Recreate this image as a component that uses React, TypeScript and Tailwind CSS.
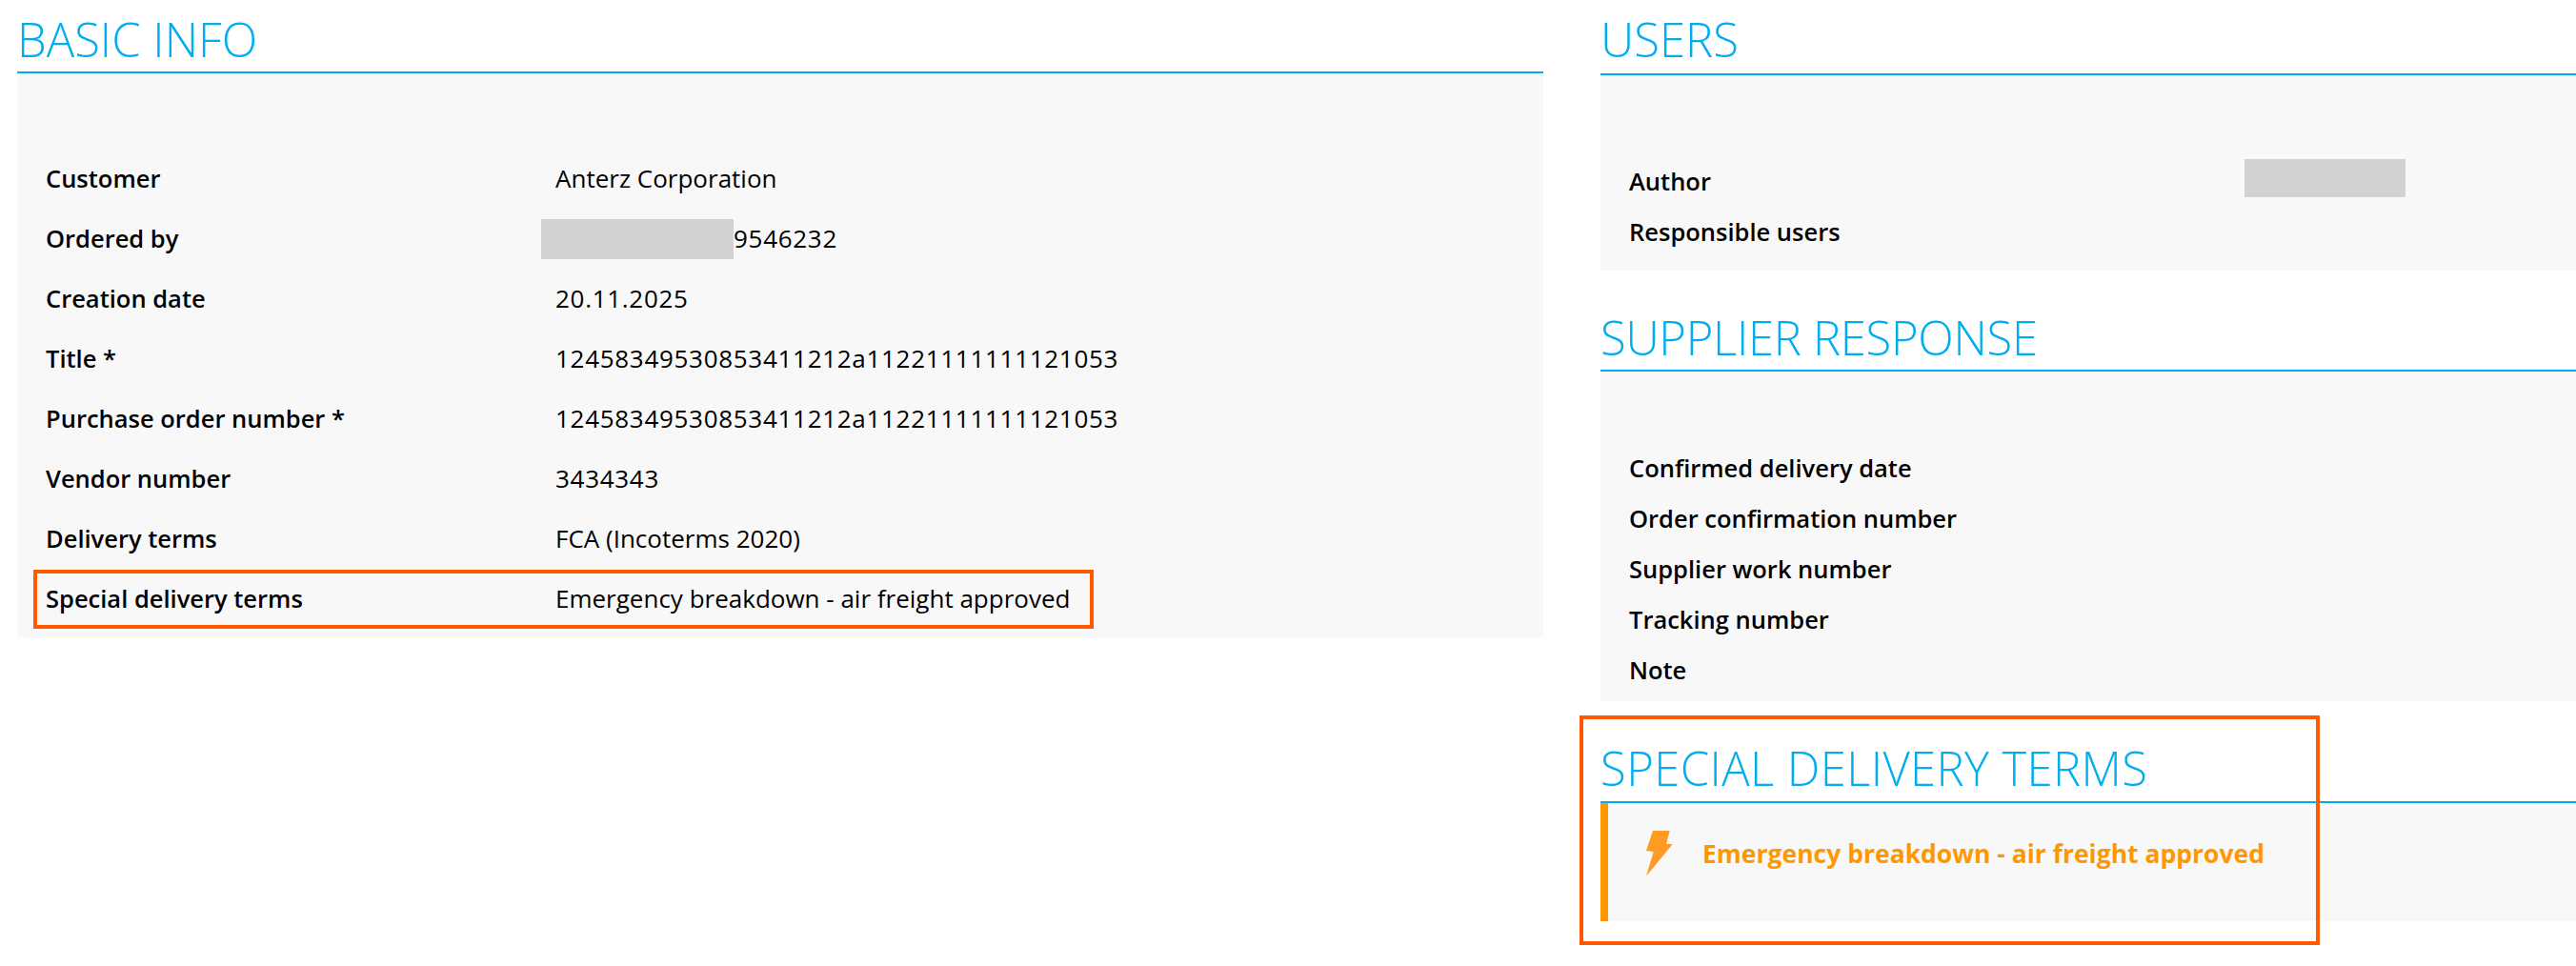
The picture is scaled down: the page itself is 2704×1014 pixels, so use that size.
const basicRows = [
  ["Customer", "Anterz Corporation"],
  ["Ordered by", "9546232"],
  ["Creation date", "20.11.2025"],
  ["Title *", "12458349530853411212a11221111111121053"],
  ["Purchase order number *", "12458349530853411212a11221111111121053"],
  ["Vendor number", "3434343"],
  ["Delivery terms", "FCA (Incoterms 2020)"],
];

const supplierRows = [
  "Confirmed delivery date",
  "Order confirmation number",
  "Supplier work number",
  "Tracking number",
  "Note",
];

function SectionTitle({ title, className }: { title: string; className: string }) {
  return (
    <h2 className={`border-b-2 border-[#00aeef] text-[49px] font-light leading-[60px] text-[#00aeef] ${className}`}>
      {title}
    </h2>
  );
}

function Redacted({ className }: { className: string }) {
  return <span className={`inline-block bg-[#d1d2d4] align-middle ${className}`} />;
}

function BasicRow({ label, value }: { label: string; value: string }) {
  // the digit runs sit wider in the reference than Open Sans sets them
  const numeric = /\d{4}/.test(value) && !value.includes("(");
  return (
    <div className="flex h-[63px] items-center pl-[30px]">
      <span className="w-[535px] shrink-0 text-[25.5px] font-semibold">{label}</span>
      <span className={`flex items-center ${numeric ? "tracking-[0.7px]" : ""}`}>
        {label === "Ordered by" ? <Redacted className="ml-[-15px] h-[42px] w-[202px]" /> : null}
        {value}
      </span>
    </div>
  );
}

export default function App() {
  return (
    <div className="flex min-h-[1014px] w-[2704px] overflow-hidden bg-white font-['Open_Sans',sans-serif] text-[26px] text-black">
      <section className="ml-[18px] w-[1602px] shrink-0">
        <SectionTitle title="BASIC INFO" className="h-[77px] pt-[11px]" />
        <div className="bg-[#f8f8f8] pb-[9px] pt-[79px]">
          {basicRows.map(([label, value]) => (
            <BasicRow key={label} label={label} value={value} />
          ))}
          <div className="relative">
            <BasicRow label="Special delivery terms" value="Emergency breakdown - air freight approved" />
            <div className="absolute left-[17px] top-[1px] h-[62px] w-[1113px] border-4 border-[#ff5a00]" />
          </div>
        </div>
      </section>

      <div className="relative ml-[60px] min-w-0 flex-1">
        <SectionTitle title="USERS" className="h-[79px] pt-[11px]" />
        <div className="bg-[#f8f8f8] pb-[14px] pl-[30px] pt-[85px] text-[25.5px]">
          <div className="flex h-[53px] items-center">
            <span className="w-[646px] shrink-0 font-semibold">Author</span>
            <Redacted className="mt-[-7px] h-[40px] w-[169px]" />
          </div>
          <div className="flex h-[53px] items-center font-semibold">Responsible users</div>
        </div>

        <SectionTitle title="SUPPLIER RESPONSE" className="h-[106px] pt-[40px] tracking-[-0.3px]" />
        <div className="bg-[#f8f8f8] pb-[6px] pl-[30px] pt-[75px] text-[25.5px]">
          {supplierRows.map((label) => (
            <div key={label} className="flex h-[53px] items-center font-semibold">
              {label}
            </div>
          ))}
        </div>

        <SectionTitle title="SPECIAL DELIVERY TERMS" className="h-[107px] pt-[40px] tracking-[0.4px]" />
        <div className="flex h-[124px] items-start border-l-8 border-[#ff9800] bg-[#f8f8f8] pl-[40px] pt-[29px]">
          <svg viewBox="28 13 28 48" className="h-[48px] w-[28px] shrink-0 blur-[0.5px]">
            <polygon points="35,13 52.7,13 49,27 55.7,27 28,60.7 35.7,35 28,34" fill="#ff9a22" />
          </svg>
          <span className="ml-[31px] mt-[7px] text-[26.5px] font-bold leading-[34px] text-[#ff9800]">
            Emergency breakdown - air freight approved
          </span>
        </div>

        <div className="absolute left-[-22px] top-[751px] h-[241px] w-[777px] border-4 border-[#ff5a00]" />
      </div>
    </div>
  );
}
